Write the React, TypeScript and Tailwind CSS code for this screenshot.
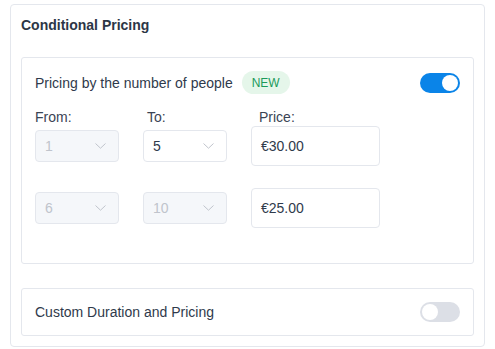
type SelectProps = { value: string; disabled?: boolean };

function Chevron() {
  return (
    <svg width="11" height="6" viewBox="0 0 11 6" fill="none" className="text-[#c0c4cc]">
      <path d="M0.5 0.5L5.5 5.2L10.5 0.5" stroke="currentColor" strokeWidth="1" />
    </svg>
  );
}

function FakeSelect({ value, disabled }: SelectProps) {
  return (
    <div
      className={
        'flex h-[32px] w-[84px] items-center justify-between rounded-[4px] border border-[#e4e7ed] pl-[9px] pr-[12px] ' +
        (disabled ? 'bg-[#f5f7fa] text-[#c0c4cc]' : 'bg-white text-[#2f3a4b]')
      }
    >
      <span className="text-[14px] leading-[20px]">{value}</span>
      <Chevron />
    </div>
  );
}

function Toggle({ on }: { on: boolean }) {
  return (
    <div
      className={
        'flex h-[20px] w-[40px] items-center rounded-full px-[2px] ' +
        (on ? 'justify-end bg-[#0a84e8]' : 'justify-start bg-[#dcdfe6]')
      }
    >
      <div className="h-[16px] w-[16px] rounded-full bg-white" />
    </div>
  );
}

function PriceRow({ from, to, price, toDisabled }: { from: string; to: string; price: string; toDisabled?: boolean }) {
  return (
    <div className="flex items-center gap-[24px]">
      <FakeSelect value={from} disabled />
      <FakeSelect value={to} disabled={toDisabled} />
      <div className="flex h-[40px] w-[129px] items-center rounded-[4px] border border-[#e4e7ed] bg-white pl-[9px] text-[14px] text-[#2f3a4b]">
        {price}
      </div>
    </div>
  );
}

export default function App() {
  return (
    <div className="h-[349px] w-[495px] bg-white pt-[4px] pl-[10px] font-['Liberation_Sans',Arial,sans-serif] text-[#2f3a4b]">
      <div className="h-[343px] w-[475px] rounded-[4px] border border-[#e4e7ed] px-[10px] pt-[10px]">
        <h2 className="text-[14px] font-bold leading-[20px] text-[#2c3646]">Conditional Pricing</h2>

        <div className="mt-[22px] h-[207px] rounded-[3px] border border-[#e4e7ed] px-[13px] pt-[13px]">
          <div className="flex h-[23px] items-center justify-between">
            <div className="flex items-center gap-[9px]">
              <span className="text-[14px] leading-[20px]">Pricing by the number of people</span>
              <span className="flex h-[23px] items-center rounded-full bg-[#e5f6ea] px-[10px] text-[12px] text-[#1b9a5a]">
                NEW
              </span>
            </div>
            <Toggle on />
          </div>

          <div className="mt-[14px] flex h-[18px] items-center text-[14px] leading-[18px] text-[#3a4454]">
            <span className="w-[112px]">From:</span>
            <span className="w-[112px]">To:</span>
            <span>Price:</span>
          </div>

          <div className="flex flex-col gap-[22px]">
            <PriceRow from="1" to="5" price="€30.00" />
            <PriceRow from="6" to="10" price="€25.00" toDisabled />
          </div>
        </div>

        <div className="mt-[24px] flex h-[48px] items-center justify-between rounded-[3px] border border-[#e4e7ed] px-[13px]">
          <span className="text-[14px] leading-[20px]">Custom Duration and Pricing</span>
          <Toggle on={false} />
        </div>
      </div>
    </div>
  );
}
